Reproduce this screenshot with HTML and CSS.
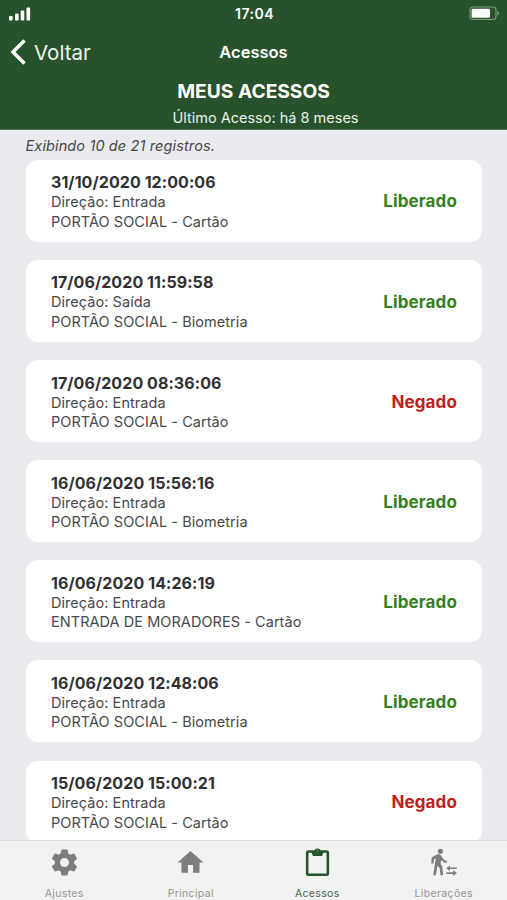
FILE: index.html
```html
<!DOCTYPE html>
<html lang="pt-BR">
<head>
<meta charset="utf-8">
<title>Acessos</title>
<link rel="stylesheet" href="styles.css">
</head>
<body>
<div class="app">
  <header class="header">
    <div class="status">
      <svg class="signal" viewBox="0 0 22 14" fill="#fff"><rect x="0" y="9" width="3.600" height="4.500" rx="1"/><rect x="6" y="6.500" width="3.600" height="7" rx="1"/><rect x="11.700" y="3.500" width="3.600" height="10" rx="1"/><rect x="17.500" y="0.500" width="3.600" height="13" rx="1"/></svg>
      <span class="time">17:04</span>
      <svg class="battery" viewBox="0 0 31 15"><rect x="1" y="1" width="26" height="12.500" rx="3" fill="none" stroke="#7c9b7e" stroke-width="1.200"/><rect x="2.600" y="2.800" width="18.400" height="9" rx="1.400" fill="#fff"/><path d="M28.300 5v4.600c1.200-.5 1.800-1.200 1.800-2.300S29.500 5.500 28.300 5z" fill="#7c9b7e"/></svg>
    </div>
    <nav class="nav">
      <a class="back"><svg class="chevron" viewBox="0 0 17 26"><path d="M14.500 1.500 3 13l11.500 11.500" fill="none" stroke="#fff" stroke-width="3.500"/></svg><span>Voltar</span></a>
      <span class="title">Acessos</span>
    </nav>
    <h1 class="heading">MEUS ACESSOS</h1>
    <p class="last">Último Acesso: há 8 meses</p>
  </header>
  <main class="content">
    <p class="count">Exibindo 10 de 21 registros.</p>
    <ul class="list">
      <li class="card"><div><strong class="date">31/10/2020 12:00:06</strong><p>Direção: Entrada</p><p>PORTÃO SOCIAL - Cartão</p></div><span class="state">Liberado</span></li>
      <li class="card"><div><strong class="date">17/06/2020 11:59:58</strong><p>Direção: Saída</p><p>PORTÃO SOCIAL - Biometria</p></div><span class="state">Liberado</span></li>
      <li class="card"><div><strong class="date">17/06/2020 08:36:06</strong><p>Direção: Entrada</p><p>PORTÃO SOCIAL - Cartão</p></div><span class="state denied">Negado</span></li>
      <li class="card"><div><strong class="date">16/06/2020 15:56:16</strong><p>Direção: Entrada</p><p>PORTÃO SOCIAL - Biometria</p></div><span class="state">Liberado</span></li>
      <li class="card"><div><strong class="date">16/06/2020 14:26:19</strong><p>Direção: Entrada</p><p>ENTRADA DE MORADORES - Cartão</p></div><span class="state">Liberado</span></li>
      <li class="card"><div><strong class="date">16/06/2020 12:48:06</strong><p>Direção: Entrada</p><p>PORTÃO SOCIAL - Biometria</p></div><span class="state">Liberado</span></li>
      <li class="card"><div><strong class="date">15/06/2020 15:00:21</strong><p>Direção: Entrada</p><p>PORTÃO SOCIAL - Cartão</p></div><span class="state denied">Negado</span></li>
    </ul>
  </main>
  <footer class="tabs">
    <a class="tab"><svg class="icon" viewBox="0 0 24 24"><path d="M12 15.500A3.500 3.500 0 0 1 8.500 12 3.500 3.500 0 0 1 12 8.500a3.500 3.500 0 0 1 3.500 3.500 3.500 3.500 0 0 1-3.500 3.500m7.430-2.530c.04-.32.07-.64.07-.97s-.03-.66-.07-1l2.110-1.630c.19-.15.24-.42.12-.64l-2-3.460c-.12-.22-.39-.31-.61-.22l-2.490 1c-.52-.39-1.060-.73-1.690-.98l-.37-2.650A.506.506 0 0 0 14 2h-4c-.25 0-.46.18-.5.42l-.37 2.650c-.63.25-1.170.59-1.690.98l-2.490-1c-.22-.09-.49 0-.61.22l-2 3.460c-.13.22-.07.49.12.64L4.570 11c-.04.34-.07.67-.07 1s.03.65.07.97l-2.110 1.660c-.19.15-.25.42-.12.64l2 3.460c.12.22.39.3.61.22l2.490-1.010c.52.4 1.060.74 1.690.99l.37 2.650c.04.24.25.42.5.42h4c.25 0 .46-.18.5-.42l.37-2.650c.63-.26 1.170-.59 1.690-.99l2.490 1.010c.22.08.49 0 .61-.22l2-3.460c.12-.22.07-.49-.12-.64l-2.110-1.660z"/></svg><span>Ajustes</span></a>
    <a class="tab"><svg class="icon" viewBox="0 0 24 24"><path d="M10 20v-6h4v6h5v-8h3L12 3 2 12h3v8h5z"/></svg><span>Principal</span></a>
    <a class="tab active"><svg class="icon" viewBox="0 0 24 24"><rect x="4" y="3.500" width="16" height="18" rx="1.200" fill="none" stroke="#21562a" stroke-width="2"/><path d="M7.200 3.300h2.200a2.650 2.650 0 0 1 5.200 0h2.200L15.600 7H8.400zM12 2.200a1.100 1.100 0 1 0 0 2.200 1.100 1.100 0 0 0 0-2.200z" fill-rule="evenodd"/></svg><span>Acessos</span></a>
    <a class="tab"><svg class="icon walk" viewBox="0 0 28 31"><circle cx="10.400" cy="4.300" r="2.600"/><path d="M6.500 7.800c2.200-.9 3.900-.5 4.900 1.200l1.100 1.900c.8 1.400 2.200 2.400 4.700 3.100l-.7 2.100c-2.400-.5-4-1.500-5.300-3l-.7 3.900 1.700 2.300.9 8.900H10.500l-.9-7.200-2.100-2.300-1.700 9.500H3.200L5.700 11.400l-1.600.7-.6 4.300H1.200L1.800 10.200z"/><path d="M16.300 21.200l3.700-2.800v2h6.800v1.600H20v2zM26.900 26.100l-3.700-2.800v2h-6.800v1.600h6.800v2z"/></svg><span>Liberações</span></a>
  </footer>
</div>
</body>
</html>
```

FILE: styles.css
```css
* { box-sizing: border-box; }
body { margin: 0; font-family: Inter, sans-serif; background: #ebebef; }
p, h1, ul { margin: 0; padding: 0; }
.app { display: flex; flex-direction: column; width: 507px; height: 900px; overflow: hidden; }
.header { flex: 0 0 130px; background: #27522b; color: #fff; text-align: center; border-bottom: 1px solid #52745a; }
.status { display: grid; grid-template-columns: 1fr auto 1fr; align-items: center; height: 27px; padding: 0 7px 0 9px; }
.signal { width: 22px; height: 14px; }
.time { font-size: 14px; line-height: 27px; font-weight: 600; letter-spacing: .5px; }
.battery { width: 31px; height: 15px; justify-self: end; }
.nav { display: grid; grid-template-columns: 1fr auto 1fr; align-items: center; height: 50px; padding: 0 10px; }
.back { display: flex; align-items: center; gap: 7px; font-size: 20.500px; color: #f2f6f0; }
.chevron { width: 17px; height: 26px; }
.title { font-size: 16.500px; font-weight: 600; }
.heading { font-size: 19.200px; line-height: 28px; font-weight: 700; }
.last { padding-left: 24px; font-size: 14.500px; line-height: 26px; height: 24px; color: #eaf1e9; }
.content { flex: 1 1 0; min-height: 0; overflow: hidden; padding: 5px 25px 0 26px; }
.count { height: 24.500px; line-height: 21px; font-size: 14.500px; letter-spacing: .12px; text-indent: -.5px; font-style: italic; color: #47474a; }
.list { display: grid; gap: 18.200px; list-style: none; }
.card { display: flex; align-items: center; justify-content: space-between; height: 82px; padding: 2px 25px 0; background: #fff; border-radius: 12px; font-size: 14.500px; line-height: 19.300px; letter-spacing: .05px; color: #48484a; }
.date { display: block; font-size: 16px; line-height: 20px; letter-spacing: .07px; font-weight: 700; color: #303032; }
.state { padding-top: 1px; font-size: 17px; letter-spacing: .12px; font-weight: 700; color: #348020; }
.denied { color: #bd221b; }
.tabs { flex: 0 0 60px; display: grid; grid-template-columns: repeat(4, 1fr); padding-left: 1px; background: #f2f2f2; border-top: 1px solid #dedee1; }
.tab { display: flex; flex-direction: column; align-items: center; padding-top: 6px; font-size: 10.500px; line-height: 13px; letter-spacing: .35px; color: #929292; }
.icon { width: 31px; height: 31px; margin-bottom: 9px; fill: #7d7d7d; }
.walk { width: 28px; height: 31px; }
.active { color: #42664a; }
.active .icon { fill: #21562a; }
```
